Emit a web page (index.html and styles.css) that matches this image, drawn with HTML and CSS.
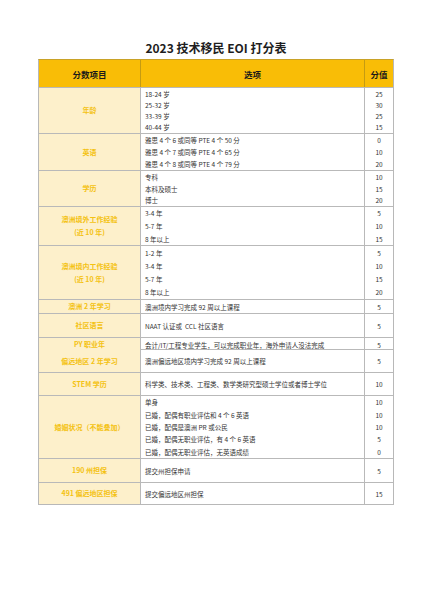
FILE: index.html
```html
<!DOCTYPE html>
<html lang="zh-CN">
<head>
<meta charset="utf-8">
<title>2023 技术移民 EOI 打分表</title>
<link rel="stylesheet" href="styles.css">
</head>
<body>
<main class="page">
  <h1 class="title">2023 技术移民 EOI 打分表</h1>
  <div class="table">
    <div class="row head h27">
      <div class="cell cat-h">分数项目</div>
      <div class="cell opt-h">选项</div>
      <div class="cell score-h">分值</div>
    </div>

    <div class="row h46">
      <div class="cell cat">年龄</div>
      <div class="cell opts"><div class="ln">18-24 岁</div><div class="ln">25-32 岁</div><div class="ln">33-39 岁</div><div class="ln">40-44 岁</div></div>
      <div class="cell scores"><div class="ln">25</div><div class="ln">30</div><div class="ln">25</div><div class="ln">15</div></div>
    </div>

    <div class="row h37">
      <div class="cell cat">英语</div>
      <div class="cell opts"><div class="ln">雅思 4 个 6 或同等 PTE 4 个 50 分</div><div class="ln">雅思 4 个 7 或同等 PTE 4 个 65 分</div><div class="ln">雅思 4 个 8 或同等 PTE 4 个 79 分</div></div>
      <div class="cell scores"><div class="ln">0</div><div class="ln">10</div><div class="ln">20</div></div>
    </div>

    <div class="row h36">
      <div class="cell cat">学历</div>
      <div class="cell opts"><div class="ln">专科</div><div class="ln">本科及硕士</div><div class="ln">博士</div></div>
      <div class="cell scores"><div class="ln">10</div><div class="ln">15</div><div class="ln">20</div></div>
    </div>

    <div class="row h39">
      <div class="cell cat">澳洲境外工作经验<br>(近 10 年)</div>
      <div class="cell opts"><div class="ln">3-4 年</div><div class="ln">5-7 年</div><div class="ln">8 年以上</div></div>
      <div class="cell scores"><div class="ln">5</div><div class="ln">10</div><div class="ln">15</div></div>
    </div>

    <div class="row h54">
      <div class="cell cat">澳洲境内工作经验<br>(近 10 年)</div>
      <div class="cell opts"><div class="ln">1-2 年</div><div class="ln">3-4 年</div><div class="ln">5-7 年</div><div class="ln">8 年以上</div></div>
      <div class="cell scores"><div class="ln">5</div><div class="ln">10</div><div class="ln">15</div><div class="ln">20</div></div>
    </div>

    <div class="row h14">
      <div class="cell cat">澳洲 2 年学习</div>
      <div class="cell opts"><div class="ln">澳洲境内学习完成 92 周以上课程</div></div>
      <div class="cell scores"><div class="ln">5</div></div>
    </div>

    <div class="row h24">
      <div class="cell cat">社区语言</div>
      <div class="cell opts"><div class="ln">NAAT 认证或&nbsp; CCL 社区语言</div></div>
      <div class="cell scores"><div class="ln">5</div></div>
    </div>

    <div class="row h12">
      <div class="cell cat">PY 职业年</div>
      <div class="cell opts"><div class="ln">会计/IT/工程专业学生，可以完成职业年，海外申请人没法完成</div></div>
      <div class="cell scores"><div class="ln">5</div></div>
    </div>

    <div class="row h23">
      <div class="cell cat">偏远地区 2 年学习</div>
      <div class="cell opts"><div class="ln">澳洲偏远地区境内学习完成 92 周以上课程</div></div>
      <div class="cell scores"><div class="ln">5</div></div>
    </div>

    <div class="row h23">
      <div class="cell cat">STEM 学历</div>
      <div class="cell opts"><div class="ln">科学类、技术类、工程类、数学类研究型硕士学位或者博士学位</div></div>
      <div class="cell scores"><div class="ln">10</div></div>
    </div>

    <div class="row h63">
      <div class="cell cat">婚姻状况（不能叠加）</div>
      <div class="cell opts"><div class="ln">单身</div><div class="ln">已婚，配偶有职业评估和 4 个 6 英语</div><div class="ln">已婚，配偶是澳洲 PR 或公民</div><div class="ln">已婚，配偶无职业评估，有 4 个 6 英语</div><div class="ln">已婚，配偶无职业评估，无英语成绩</div></div>
      <div class="cell scores"><div class="ln">10</div><div class="ln">10</div><div class="ln">10</div><div class="ln">5</div><div class="ln">0</div></div>
    </div>

    <div class="row h24">
      <div class="cell cat">190 州担保</div>
      <div class="cell opts"><div class="ln">提交州担保申请</div></div>
      <div class="cell scores"><div class="ln">5</div></div>
    </div>

    <div class="row h22">
      <div class="cell cat">491 偏远地区担保</div>
      <div class="cell opts"><div class="ln">提交偏远地区州担保</div></div>
      <div class="cell scores"><div class="ln">15</div></div>
    </div>
  </div>
</main>
</body>
</html>
```

FILE: styles.css
```css
* { box-sizing: border-box; }

html, body {
  margin: 0;
  padding: 0;
  background: #ffffff;
}

body {
  font-family: "Noto Sans CJK SC", "Noto Sans", sans-serif;
  color: #333333;
}

.page {
  width: 432px;
  height: 600px;
  padding-top: 40px;
}

.title {
  margin: 0 0 3px 0;
  font-size: 12px;
  line-height: 16px;
  font-weight: 700;
  text-align: center;
  color: #1e1e1e;
}

.table {
  width: 356px;
  margin: 0 auto;
  border: 1px solid #b8b8b8;
  border-top-color: #c9a227;
}

.row {
  display: grid;
  grid-template-columns: 102px 224px 1fr;
  border-top: 1px solid #b9b9b9;
}

.row.head {
  border-top: none;
  background: #f9bd06;
}

.cell {
  display: flex;
  flex-direction: column;
  min-width: 0;
}

.cat-h, .opt-h, .score-h {
  align-items: center;
  justify-content: center;
  font-size: 8.5px;
  font-weight: 700;
  color: #1a1a1a;
}

.cat-h, .opt-h {
  border-right: 1px solid #c59b12;
}

.cat {
  background: #fdf0cb;
  border-right: 1px solid #b9b9b9;
  align-items: center;
  justify-content: center;
  text-align: center;
  font-size: 7px;
  line-height: 13px;
  font-weight: 700;
  color: #f4c212;
}

.opts {
  border-right: 1px solid #b9b9b9;
  padding-left: 4px;
}

.ln {
  flex: 1;
  display: flex;
  align-items: center;
  font-size: 6.5px;
  line-height: 8px;
  white-space: nowrap;
  color: #333333;
}

.scores .ln {
  justify-content: center;
}

.h27 { height: 27px; }
.h46 { height: 46px; }
.h37 { height: 37px; }
.h36 { height: 36px; }
.h39 { height: 39px; }
.h54 { height: 54px; }
.h14 { height: 14px; }
.h24 { height: 24px; }
.h12 { height: 12px; }
.h23 { height: 23px; }
.h63 { height: 63px; }
.h22 { height: 22px; }
```
